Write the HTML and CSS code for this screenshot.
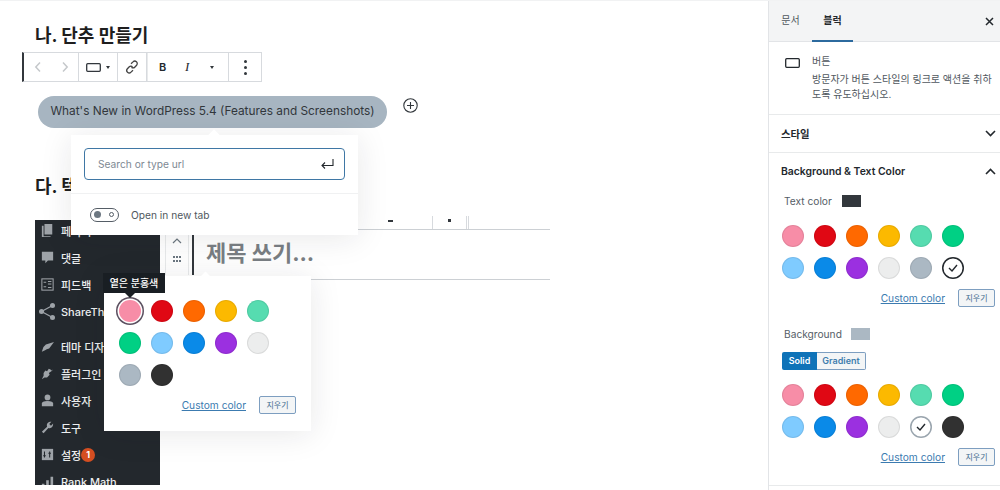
FILE: index.html
```html
<!DOCTYPE html>
<html lang="ko">
<head>
  <meta charset="UTF-8">
  <title>버튼 블럭</title>
  <link rel="stylesheet" href="styles.css">
</head>
<body>
  <div class="page">
    <main class="editor">
      <h2 class="heading">나. 단추 만들기</h2>

      <div class="toolbar">
        <div class="tool-group tool-arrows">
          <svg width="8" height="12" viewBox="0 0 8 12"><path d="M6 1.5 1.8 6 6 10.500" fill="none" stroke="#c5c8cb" stroke-width="1.500"/></svg>
          <svg width="8" height="12" viewBox="0 0 8 12"><path d="M2 1.500 6.200 6 2 10.500" fill="none" stroke="#c5c8cb" stroke-width="1.500"/></svg>
        </div>
        <div class="tool-group tool-block">
          <svg width="15" height="9" viewBox="0 0 15 9"><rect x=".7" y=".7" width="13.600" height="7.600" rx="1" fill="none" stroke="#32373c" stroke-width="1.300"/></svg>
          <span class="caret"></span>
        </div>
        <div class="tool-group tool-link">
          <svg width="14" height="14" viewBox="0 0 14 14" fill="none" stroke="#444" stroke-width="1.300"><path d="M6 3.800 8 1.900a2.200 2.200 0 0 1 3.600 3.300L9.700 7.200a2.200 2.200 0 0 1-3.200 0"/><path d="M8 10.200 6 12.100a2.200 2.200 0 0 1-3.600-3.300l1.900-2a2.200 2.200 0 0 1 3.200 0"/></svg>
        </div>
        <div class="tool-group tool-format">
          <b class="tool-b">B</b>
          <i class="tool-i">I</i>
          <span class="caret"></span>
        </div>
        <div class="tool-group tool-more">
          <span class="dot"></span><span class="dot"></span><span class="dot"></span>
        </div>
      </div>

      <div class="button-row">
        <div class="wp-button">What's New in WordPress 5.4 (Features and Screenshots)</div>
        <svg class="add-icon" width="15" height="15" viewBox="0 0 15 15" fill="none" stroke="#32373c" stroke-width="1.100"><circle cx="7.500" cy="7.500" r="6.700"/><path d="M7.500 4v7M4 7.500h7"/></svg>
      </div>

      <h2 class="heading heading-next">다. 텍스트 색상</h2>

      <div class="shot">
        <nav class="admin-menu">
          <div class="menu-item"><svg viewBox="0 0 15 15"><path d="M4 0h9v12H4zM1 2h2v12h8v1H1z" fill="#9ea3a8"/></svg><span>페이지</span></div>
          <div class="menu-item"><svg viewBox="0 0 15 15"><path d="M1 1h13v10H8l-3 3v-3H1z" fill="#9ea3a8"/></svg><span>댓글</span></div>
          <div class="menu-item"><svg viewBox="0 0 15 15" fill="none" stroke="#9ea3a8" stroke-width="1.200"><rect x="1" y="1" width="13" height="13"/><path d="M3 5h3M8 4h4M8 7h4M3 10h3M8 11h4"/></svg><span>피드백</span></div>
          <div class="menu-item menu-gap"><svg class="share-icon" viewBox="0 0 16 17" fill="#9ea3a8"><circle cx="2.500" cy="8.500" r="2.500"/><circle cx="13.500" cy="2.500" r="2.500"/><circle cx="13.500" cy="14.500" r="2.500"/><path d="M2.500 8.500 13.500 2.500M2.500 8.500l11 6" stroke="#9ea3a8" stroke-width="1.300"/></svg><span>ShareThis</span></div>
          <div class="menu-item"><svg viewBox="0 0 16 15"><path d="M1 14 3 8l3-3 10-3-6 8-3 1-2 1z" fill="#9ea3a8"/></svg><span>테마 디자인</span></div>
          <div class="menu-item"><svg viewBox="0 0 15 15"><path d="M9 2 7 5 5 4 3 7v3l-2 4 3-2h3l3-3-1-2 3-2 2-2-2 1-1-1z" fill="#9ea3a8"/></svg><span>플러그인</span></div>
          <div class="menu-item"><svg viewBox="0 0 15 15" fill="#9ea3a8"><circle cx="7.500" cy="4" r="3.300"/><path d="M1 14v-3c0-2 2-3 6.500-3s6.500 1 6.500 3v3z"/></svg><span>사용자</span></div>
          <div class="menu-item"><svg viewBox="0 0 15 15"><path d="M1 12.500 7 6.500C6 3 8.500 .8 12 1L9.500 3.500l2 2L14 3c.3 3.500-2 6-5.500 5L3 14z" fill="#9ea3a8"/></svg><span>도구</span></div>
          <div class="menu-item"><svg viewBox="0 0 15 15"><path d="M1 1h13v13H1z" fill="#9ea3a8"/><path d="M4 4v7M10 4v7M2.500 9h3M8.500 6h3" stroke="#23282d" stroke-width="1.200"/></svg><span>설정</span><em class="menu-badge">1</em></div>
          <div class="menu-item"><svg viewBox="0 0 15 15"><path d="M1 14v-4h3v4zM6 14V6h3v8zM11 14V2h3v12z" fill="#9ea3a8"/></svg><span>Rank Math</span></div>
        </nav>

        <div class="shot-editor">
          <div class="shot-toolbar">
            <span class="shot-mark shot-mark-a"></span>
            <span class="shot-tick"></span>
            <span class="shot-mark shot-mark-b"></span>
            <span class="shot-tick"></span>
            <span class="shot-tick"></span>
          </div>
          <div class="shot-title">
            <div class="shot-mover">
              <svg width="10" height="6" viewBox="0 0 10 6"><path d="M1 5 5 1l4 4" fill="none" stroke="#6c7781" stroke-width="1.200"/></svg>
              <svg width="10" height="6" viewBox="0 0 10 6" fill="#6c7781"><path d="M1 0h2v2H1zM4 0h2v2H4zM7 0h2v2H7zM1 4h2v2H1zM4 4h2v2H4zM7 4h2v2H7z"/></svg>
            </div>
            <div class="shot-heading">제목 쓰기...</div>
          </div>
        </div>
      </div>

      <!-- link popover over the button -->
      <div class="link-popover">
        <div class="link-search">
          <span class="link-placeholder">Search or type url</span>
          <svg width="13" height="10" viewBox="0 0 13 10" fill="none" stroke="#23282d" stroke-width="1.100"><path d="M12 0v6.500H1"/><path d="M4 3.500 1 6.500l3 3"/></svg>
        </div>
        <div class="link-option">
          <span class="toggle"><span class="toggle-knob"></span><span class="toggle-off"></span></span>
          <span>Open in new tab</span>
        </div>
      </div>

      <!-- colour popover over the screenshot -->
      <div class="color-popover">
        <div class="swatches swatches-five">
          <span class="swatch pink swatch-focus"></span>
          <span class="swatch red"></span>
          <span class="swatch orange"></span>
          <span class="swatch amber"></span>
          <span class="swatch mint"></span>
          <span class="swatch green"></span>
          <span class="swatch sky"></span>
          <span class="swatch blue"></span>
          <span class="swatch purple"></span>
          <span class="swatch light"></span>
          <span class="swatch slate"></span>
          <span class="swatch dark"></span>
        </div>
        <div class="color-actions">
          <a class="custom-link">Custom color</a>
          <span class="clear-btn">지우기</span>
        </div>
      </div>
      <div class="tooltip">옅은 분홍색</div>
    </main>

    <aside class="sidebar">
      <div class="side-tabs">
        <span class="side-tab">문서</span>
        <span class="side-tab side-tab-active">블럭</span>
        <svg class="side-close" width="9" height="9" viewBox="0 0 9 9"><path d="M1 1l7 7M8 1 1 8" stroke="#23282d" stroke-width="1.500"/></svg>
      </div>

      <div class="block-card">
        <svg width="15" height="10" viewBox="0 0 15 10"><rect x=".7" y=".7" width="13.600" height="8.600" rx="1" fill="none" stroke="#23282d" stroke-width="1.300"/></svg>
        <div class="block-text">
          <div class="block-name">버튼</div>
          <p class="block-desc">방문자가 버튼 스타일의 링크로 액션을 취하도록 유도하십시오.</p>
        </div>
      </div>

      <div class="panel-head">
        <span>스타일</span>
        <svg width="11" height="7" viewBox="0 0 11 7"><path d="M1 1l4.500 4.500L10 1" fill="none" stroke="#23282d" stroke-width="1.600"/></svg>
      </div>

      <div class="panel">
        <div class="panel-head panel-head-open">
          <span>Background &amp; Text Color</span>
          <svg width="11" height="7" viewBox="0 0 11 7"><path d="M1 6l4.500-4.500L10 6" fill="none" stroke="#23282d" stroke-width="1.600"/></svg>
        </div>

        <div class="color-label"><span>Text color</span><span class="chip chip-dark"></span></div>
        <div class="swatches">
          <span class="swatch pink"></span>
          <span class="swatch red"></span>
          <span class="swatch orange"></span>
          <span class="swatch amber"></span>
          <span class="swatch mint"></span>
          <span class="swatch green"></span>
          <span class="swatch sky"></span>
          <span class="swatch blue"></span>
          <span class="swatch purple"></span>
          <span class="swatch light"></span>
          <span class="swatch slate"></span>
          <span class="swatch swatch-on dark-ring"><svg width="10" height="8" viewBox="0 0 10 8"><path d="M1 4l3 3 5-6" fill="none" stroke="#23282d" stroke-width="1.400"/></svg></span>
        </div>
        <div class="color-actions">
          <a class="custom-link">Custom color</a>
          <span class="clear-btn">지우기</span>
        </div>

        <div class="color-label color-label-bg"><span>Background</span><span class="chip chip-slate"></span></div>
        <div class="segment">
          <span class="segment-on">Solid</span>
          <span class="segment-off">Gradient</span>
        </div>
        <div class="swatches">
          <span class="swatch pink"></span>
          <span class="swatch red"></span>
          <span class="swatch orange"></span>
          <span class="swatch amber"></span>
          <span class="swatch mint"></span>
          <span class="swatch green"></span>
          <span class="swatch sky"></span>
          <span class="swatch blue"></span>
          <span class="swatch purple"></span>
          <span class="swatch light"></span>
          <span class="swatch swatch-on slate-ring"><svg width="10" height="8" viewBox="0 0 10 8"><path d="M1 4l3 3 5-6" fill="none" stroke="#23282d" stroke-width="1.400"/></svg></span>
          <span class="swatch dark"></span>
        </div>
        <div class="color-actions">
          <a class="custom-link">Custom color</a>
          <span class="clear-btn">지우기</span>
        </div>
      </div>
    </aside>
  </div>
</body>
</html>
```

FILE: styles.css
```css
* {
  box-sizing: border-box;
}
body {
  margin: 0;
  background-color: #fff;
  color: #23282d;
  font-family: Inter, "Noto Sans CJK KR", sans-serif;
}
.page {
  display: flex;
  height: 490px;
  overflow: hidden;
  border-top: 1px solid #f1f2f3;
}
.editor {
  width: 768px;
  flex: 0 0 auto;
  position: relative;
  padding: 23px 0 0 35px;
}
.heading {
  margin: 0;
  font-size: 18px;
  line-height: 24px;
  font-weight: 700;
  color: #1e1e1e;
}
.heading-next {
  margin-top: 47px;
}

/* block toolbar */
.toolbar {
  display: flex;
  width: 240px;
  height: 30px;
  margin: 4px 0 0 -13px;
  border: 1px solid #d7dade;
  border-left: 2px solid #32373c;
  background-color: #fff;
}
.tool-group {
  display: flex;
  align-items: center;
  height: 100%;
  border-right: 1px solid #d7dade;
}
.tool-arrows {
  width: 55px;
  padding: 0 9px 0 10px;
  justify-content: space-between;
}
.tool-block {
  width: 39px;
  padding-left: 7px;
  gap: 5px;
}
.tool-link {
  width: 29px;
  justify-content: center;
}
.tool-format {
  width: 82px;
  padding-left: 11px;
  border-left: 1px solid #e8eaeb;
}
.tool-b {
  font-size: 11px;
  font-weight: 600;
  width: 26px;
}
.tool-i {
  font-family: "Liberation Serif", serif;
  font-size: 13px;
  font-weight: 400;
  width: 25px;
}
.tool-more {
  flex-direction: column;
  justify-content: center;
  flex: 1;
  gap: 3px;
  border-right: 0;
}
.dot {
  width: 3px;
  height: 3px;
  border-radius: 50%;
  background-color: #32373c;
}
.caret {
  width: 0;
  height: 0;
  border-left: 2.500px solid transparent;
  border-right: 2.500px solid transparent;
  border-top: 3px solid #32373c;
}

.button-row {
  display: flex;
  align-items: flex-start;
  margin: 14px 0 0 3px;
}
.wp-button {
  width: 349px;
  height: 32px;
  border-radius: 16px;
  background-color: #a7b5c1;
  color: #32373c;
  font-size: 11.850px;
  line-height: 30px;
  text-align: center;
  white-space: nowrap;
}
.add-icon {
  margin: 2px 0 0 16px;
}

/* screenshot inside the post */
.shot {
  display: flex;
  width: 515px;
  height: 265px;
  margin-top: 21px;
}
.admin-menu {
  width: 125px;
  flex: 0 0 auto;
  background-color: #23282d;
  overflow: hidden;
}
.menu-item {
  display: flex;
  align-items: center;
  gap: 7px;
  height: 27px;
  padding-left: 6px;
  color: #eceeef;
  font-size: 11px;
  font-weight: 500;
  white-space: nowrap;
}
.menu-item:first-child {
  margin-top: -3px;
}
.menu-item svg {
  width: 13px;
  height: 13px;
  flex: 0 0 auto;
}
.menu-item .share-icon {
  width: 16px;
  height: 17px;
  margin: 0 -1px 0 -2px;
}
.menu-gap {
  margin-bottom: 8px;
}
.menu-badge {
  width: 14px;
  height: 14px;
  margin-left: -7px;
  border-radius: 50%;
  background-color: #d54e21;
  color: #fff;
  font-size: 9px;
  font-style: normal;
  font-weight: 700;
  line-height: 14px;
  text-align: center;
}
.shot-editor {
  flex: 1;
}
.shot-toolbar {
  display: flex;
  align-items: center;
  height: 14px;
  margin-top: -4px;
  border-bottom: 1px solid #ccd0d4;
  padding-left: 228px;
}
.shot-mark {
  width: 5px;
  height: 2px;
  background-color: #32373c;
  margin-bottom: 4px;
}
.shot-tick {
  width: 1px;
  height: 13px;
  background-color: #d7dade;
  margin-left: 1px;
}
.shot-mark-b {
  width: 3px;
  height: 3px;
  margin-left: 15px;
}
.shot-tick:nth-child(2) {
  margin-left: 39px;
}
.shot-tick:nth-child(4) {
  margin-left: 15px;
}
.shot-title {
  display: flex;
  height: 50px;
  border-bottom: 1px solid #ccd0d4;
  padding: 5px 0 4px 5px;
}
.shot-mover {
  display: flex;
  flex-direction: column;
  align-items: center;
  gap: 12px;
  width: 24px;
  margin-right: 3px;
  padding-top: 3px;
  border-left: 1px solid #e8eaeb;
  border-right: 1px solid #e8eaeb;
}
.shot-heading {
  padding-left: 12px;
  border-left: 2px solid #32373c;
  font-size: 22px;
  font-weight: 700;
  line-height: 36px;
  color: #7a7f84;
}

/* popovers */
.link-popover {
  position: absolute;
  left: 71px;
  top: 134px;
  width: 287px;
  height: 100px;
  background-color: #fff;
  box-shadow: 0 3px 30px rgba(25, 30, 35, 0.1);
}
.link-popover::before {
  content: "";
  position: absolute;
  left: 139px;
  top: -4px;
  width: 8px;
  height: 8px;
  background-color: #fff;
  transform: rotate(45deg);
}
.link-search {
  position: relative;
  display: flex;
  align-items: center;
  justify-content: space-between;
  height: 32px;
  margin: 13px 13px 0;
  padding: 0 10px 0 13px;
  border: 1.500px solid #3f77a5;
  border-radius: 4px;
}
.link-placeholder {
  font-size: 10.200px;
  color: #7e8993;
}
.link-option {
  display: flex;
  align-items: center;
  gap: 12px;
  height: 42px;
  margin-top: 13px;
  padding-left: 19px;
  border-top: 1px solid #f0f1f2;
  font-size: 10.200px;
  color: #50575e;
}
.toggle {
  display: flex;
  align-items: center;
  justify-content: space-between;
  width: 29px;
  height: 14px;
  padding: 0 4px 0 3px;
  border: 1.500px solid #555d66;
  border-radius: 7px;
}
.toggle-knob {
  width: 7px;
  height: 7px;
  border-radius: 50%;
  background-color: #6c7781;
}
.toggle-off {
  width: 5px;
  height: 5px;
  border-radius: 50%;
  border: 1px solid #555d66;
}
.color-popover {
  position: absolute;
  left: 104px;
  top: 275px;
  width: 207px;
  height: 155px;
  padding: 24px 15px 0 15px;
  background-color: #fff;
  box-shadow: 0 3px 30px rgba(25, 30, 35, 0.1);
}
.color-popover::before {
  content: "";
  position: absolute;
  left: 98px;
  top: -3px;
  width: 7px;
  height: 7px;
  background-color: #fff;
  transform: rotate(45deg);
}
.tooltip {
  position: absolute;
  left: 103px;
  top: 272px;
  width: 62px;
  height: 20px;
  background-color: #191e23;
  color: #fff;
  font-size: 10px;
  font-weight: 500;
  line-height: 20px;
  text-align: center;
}
.tooltip::after {
  content: "";
  position: absolute;
  left: 22px;
  top: 20px;
  border-left: 5px solid transparent;
  border-right: 5px solid transparent;
  border-top: 5px solid #191e23;
}

/* sidebar */
.sidebar {
  flex: 1;
  border-left: 1px solid #e2e4e7;
}
.side-tabs {
  display: flex;
  align-items: stretch;
  height: 41px;
  background-color: #f3f4f5;
  border-bottom: 1px solid #e2e4e7;
  position: relative;
}
.side-tab {
  width: 43px;
  padding-top: 12px;
  font-size: 10px;
  line-height: 14px;
  text-align: center;
  color: #50575e;
}
.side-tab-active {
  width: 41px;
  font-weight: 700;
  color: #23282d;
  border-bottom: 2px solid #2c6a9e;
  margin-bottom: -1px;
}
.side-close {
  position: absolute;
  right: 6px;
  top: 16px;
}
.block-card {
  display: flex;
  gap: 12px;
  padding: 12px 8px 12px 16px;
  height: 73px;
  border-bottom: 1px solid #e8eaeb;
}
.block-card svg {
  margin-top: 4px;
  flex: 0 0 auto;
}
.block-name {
  font-size: 10px;
  line-height: 14px;
  color: #50575e;
}
.block-desc {
  margin: 4px 0 0;
  font-size: 10px;
  line-height: 15px;
  color: #50575e;
  word-break: break-all;
}
.panel-head {
  display: flex;
  align-items: center;
  justify-content: space-between;
  height: 38px;
  padding: 0 4px 0 12px;
  border-bottom: 1px solid #e8eaeb;
  font-size: 10.400px;
  font-weight: 600;
  color: #23282d;
}
.panel-head-open {
  height: 36px;
  border-bottom: 0;
}
.panel {
  padding-bottom: 19px;
  border-bottom: 1px solid #e8eaeb;
}
.color-label {
  display: flex;
  align-items: center;
  gap: 10px;
  height: 14px;
  margin: 5px 0 0 15px;
  font-size: 10.200px;
  color: #555d66;
}
.color-label-bg {
  margin-top: 20px;
  gap: 9px;
}
.chip {
  width: 19px;
  height: 12px;
}
.chip-dark {
  background-color: #32373c;
}
.chip-slate {
  background-color: #abb8c3;
}
.sidebar .swatches {
  margin: 17px 0 0 13px;
}
.swatches {
  display: grid;
  grid-template-columns: repeat(6, 22px);
  gap: 10px;
}
.swatches-five {
  grid-template-columns: repeat(5, 22px);
}
.swatch {
  display: flex;
  align-items: center;
  justify-content: center;
  width: 22px;
  height: 22px;
  border-radius: 50%;
  box-shadow: inset 0 0 0 1px rgba(0, 0, 0, 0.08);
}
.swatch-focus {
  box-shadow: 0 0 0 1.500px #fff, 0 0 0 3px #5b5060;
}
.pink { background-color: #f78da7; }
.red { background-color: #e00814; }
.orange { background-color: #ff6900; }
.amber { background-color: #fcb900; }
.mint { background-color: #56dcb0; }
.green { background-color: #00d084; }
.sky { background-color: #7fcbff; }
.blue { background-color: #0a8ae8; }
.purple { background-color: #9b30e0; }
.light { background-color: #eceded; }
.slate { background-color: #abb8c3; }
.dark { background-color: #313131; }
.swatch-on {
  background-color: #fff;
}
.dark-ring {
  box-shadow: inset 0 0 0 1.500px #23282d;
}
.slate-ring {
  box-shadow: inset 0 0 0 1.500px #9aa5ae;
}
.color-actions {
  display: flex;
  align-items: center;
  justify-content: flex-end;
  gap: 13px;
  margin: 10px 5px 0 0;
}
.color-popover .color-actions {
  margin: 10px 0 0 0;
}
.custom-link {
  font-size: 10.200px;
  color: #3c7bb0;
  text-decoration: underline;
}
.clear-btn {
  width: 37px;
  height: 18px;
  border: 1px solid #7d9ec0;
  border-radius: 2px;
  background-color: #f3f5f6;
  color: #3f6a8e;
  font-size: 8px;
  line-height: 16px;
  text-align: center;
}
.segment {
  display: inline-flex;
  height: 18px;
  margin: 11px 0 0 13px;
  font-size: 9px;
  font-weight: 600;
  line-height: 18px;
  vertical-align: top;
}
.segment-on {
  width: 35px;
  background-color: #0f73b8;
  color: #fff;
  text-align: center;
  border-radius: 2px 0 0 2px;
}
.segment-off {
  width: 49px;
  border: 1px solid #7d9ec0;
  border-left: 0;
  border-radius: 0 2px 2px 0;
  color: #3f7eae;
  background-color: #f3f5f6;
  text-align: center;
  line-height: 16px;
}
.segment + .swatches {
  margin-top: 14px;
}
```
